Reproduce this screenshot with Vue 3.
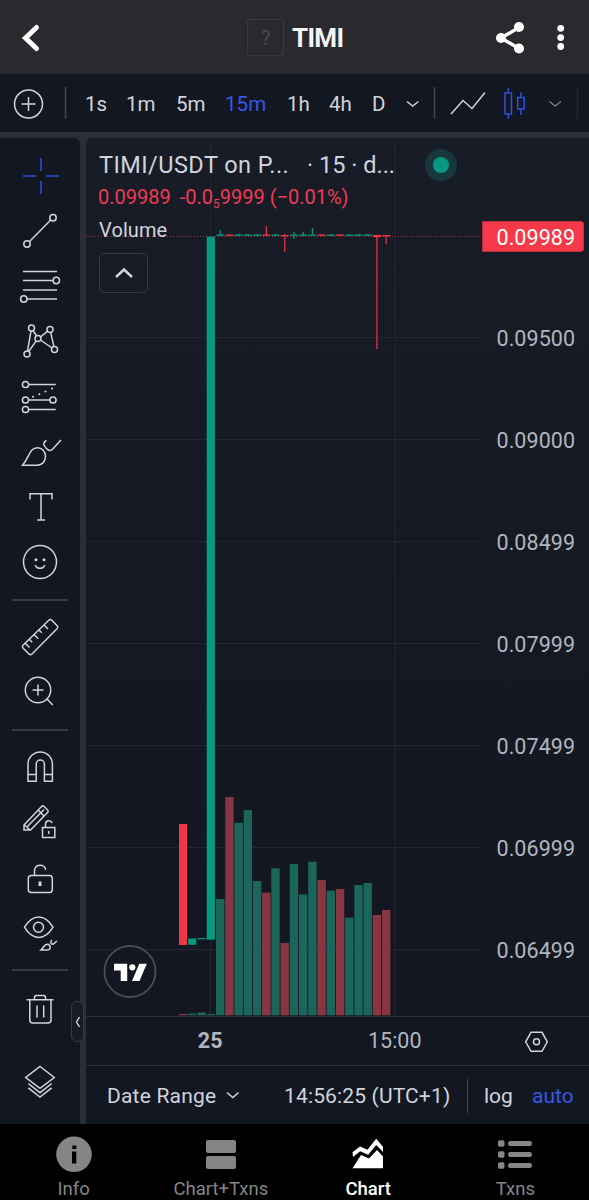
<script setup>
const intervals = [
  { t: '1s', w: 41 }, { t: '1m', w: 50 }, { t: '5m', w: 49 }, { t: '15m', w: 62, on: true },
  { t: '1h', w: 42 }, { t: '4h', w: 43 }, { t: 'D', w: 34 },
]
const prices = [
  ['0.09500', 337.5], ['0.09000', 439.5], ['0.08499', 541.5], ['0.07999', 643.5],
  ['0.07499', 745.5], ['0.06999', 847.5], ['0.06499', 949.5],
]
const pitch = 9.22
const volumes = [
  [899, 'u'], [797, 'd'], [822.7, 'u'], [810, 'u'], [881, 'u'], [892.7, 'd'], [868.3, 'u'],
  [943, 'd'], [864, 'u'], [894.3, 'u'], [861.7, 'u'], [880, 'd'], [890.7, 'u'], [889, 'd'],
  [917.7, 'u'], [885, 'u'], [883, 'u'], [915, 'd'], [910, 'd'],
].map(([y, k], i) => ({ x: 216 + i * pitch, y, k }))
const early = [[179, 1014, 'd'], [188.2, 1013.6, 'u'], [197.4, 1012.5, 'u'], [206.7, 1014, 'u']]
const candles = [
  [230, 236, 'u'], [235, 236, 'd'], [234, 235, 'u'], [234, 235, 'u'], [234, 235, 'u'],
  [226, 236, 'd'], [234, 235, 'u'], [234, 252, 'd'], [232, 239, 'u'], [232, 236, 'u'],
  [228, 235, 'u'], [234, 235, 'd'], [234, 235, 'u'], [234, 235, 'd'], [234, 235, 'u'],
  [234, 235, 'u'], [234, 235, 'u'], [235, 349, 'd'], [236, 244, 'd'],
].map(([a, b, k], i) => ({ x: 220.2 + i * pitch, a, b, k }))
</script>

<template>
  <div class="app">
    <header class="head">
      <svg class="back" width="60" height="74" viewBox="0 0 60 74"><path d="M36.500 27.500 25.500 38 36.500 48.500" /></svg>
      <div class="title"><span class="badge">?</span><span>TIMI</span></div>
      <svg class="acts" width="109" height="74" viewBox="480 0 109 74">
        <path d="M519 27.5 501 38 519 48.5" />
        <circle cx="519" cy="27" r="5" /><circle cx="501" cy="38" r="5" /><circle cx="519" cy="48.5" r="5" />
        <circle cx="560.7" cy="28.3" r="3.4" /><circle cx="560.7" cy="37.6" r="3.4" /><circle cx="560.7" cy="46.5" r="3.4" />
      </svg>
    </header>

    <nav class="bar">
      <svg width="85" height="58" viewBox="0 74 85 58" class="ln">
        <circle cx="28.5" cy="104" r="14" /><path d="M28.5 97v14M21.5 104h14" />
        <path class="sep" d="M65.5 87v32" />
      </svg>
      <span v-for="i in intervals" :key="i.t" class="int" :class="{ on: i.on }" :style="{ width: i.w + 'px' }">{{ i.t }}</span>
      <svg width="183" height="58" viewBox="406 74 183 58" class="ln">
        <path d="m407 101.500 5.700 4.500 5.700-4.500" />
        <path class="sep" d="M434.500 87v32" />
        <path d="m451 114 12-13.500 9 8 13-16" />
        <g class="blue"><path d="M508.300 88v5M508.300 114v5M520.800 92.500v5M520.800 109v6" /><path d="M505 93h6.500v21H505zM517.700 97.500h6.500V109h-6.500z" /></g>
        <path class="dim" d="m549.500 101.500 5.700 4.500 5.700-4.500" />
        <path class="faint" d="M577.500 87v32" />
      </svg>
    </nav>

    <main class="main">
      <aside class="tools">
        <svg height="65" viewBox="0 138 80 65" class="ln blue"><path d="M41 158v13M41 181v13M23 176h13M46 176h13" /></svg>
        <svg height="55" viewBox="0 203 80 55" class="ln"><circle cx="53" cy="217.700" r="3.200" /><circle cx="27" cy="244" r="3.200" /><path d="m29.300 241.700 21.400-21.700" /></svg>
        <svg height="55" viewBox="0 258 80 55" class="ln"><path d="M23 271.500h34M23 280.500h30M23 290h34M27 299h30" /><circle cx="56.300" cy="280.500" r="3.200" /><circle cx="23.800" cy="299" r="3.200" /></svg>
        <svg height="55" viewBox="0 313 80 55" class="ln"><circle cx="31.500" cy="328" r="3" /><circle cx="50" cy="329.500" r="3" /><circle cx="38" cy="338.500" r="3" /><circle cx="54.500" cy="349.500" r="3" /><circle cx="27" cy="354" r="3" /><path d="m27.500 351 3.500-20M28.700 351.500l7.500-10.600M33 330.500l3.500 5.500M40.500 337l7-5.800M40.500 340l11.500 8M50.700 332.400l3.200 14.200" /></svg>
        <svg height="56" viewBox="0 368 80 56" class="ln"><circle cx="25.500" cy="384.500" r="3.100" /><circle cx="25.500" cy="400" r="3.100" /><circle cx="53" cy="400" r="3.100" /><circle cx="25.500" cy="409.500" r="3.100" /><path d="M28.700 384.500h27M28.700 400H50M28.700 409.500h27" /><path class="dots" d="M33 396.700h.1M39.300 394.200h.1M45.500 391.500h.1M52 388.500h.1" /></svg>
        <svg height="56" viewBox="0 424 80 56" class="ln"><path d="M22.500 465.300H37c5.500 0 8.500-4.300 8.500-9s-3.500-8.600-8-8.600c-8.500 0-8 10-15 17.600zM46.500 440.500c-3 1.500-3.300 3.500-2 5.500 2 3.500 5.500 6 8 3.300l8.500-9.300" /></svg>
        <svg height="54" viewBox="0 480 80 54" class="ln"><path d="M30 499.500v-5.700h22v5.700M41 493.800V520M37 520h8" /></svg>
        <svg height="65" viewBox="0 534 80 65" class="ln"><circle cx="40" cy="562" r="16.500" /><circle class="fill" cx="36" cy="559.800" r="1.500" /><circle class="fill" cx="44" cy="559.800" r="1.500" /><path d="M35.300 565.200c1.500 4.200 7.900 4.200 9.400 0" /></svg>
        <i class="rule" />
        <svg height="62" viewBox="0 601 80 62" class="ln"><path d="M48.800 620.300q1.500-1.500 3 0l5.400 5.400q1.300 1.400 0 2.800L32 654q-1.500 1.500-3 0l-6-6q-1.300-1.400 0-2.800zM44 625l4 4M39 630l2.700 2.700M34.200 634.800l4 4M29.500 639.500l2.700 2.700M25.500 643.500l4 4" /></svg>
        <svg height="66" viewBox="0 663 80 66" class="ln"><circle cx="38" cy="690" r="12.700" /><path d="m47 699 5.800 6M38 684.500v11M32.500 690h11" /></svg>
        <i class="rule" />
        <svg height="64" viewBox="0 731 80 64" class="ln"><path d="M28 781.200v-17a12.200 12.200 0 0 1 24.400 0v17h-8v-17a4.100 4.100 0 0 0-8.200 0v17zM28 774.500h8M44.500 774.500h8" /></svg>
        <svg height="55" viewBox="0 795 80 55" class="ln"><path d="m24 825 17.500-18.500q1.300-1.200 2.600 0l3.500 3.500q1.200 1.200 0 2.500L30.500 830H24zM24 824.500l6 5.500M27.500 826.500l16.500-17M38 810l6 6" /><path d="M42.500 827.500h12.300v10H42.500zM45.500 827.500v-3.200c0-4.200 5-4.800 6.700-1.500M48.700 831v3" /></svg>
        <svg height="56" viewBox="0 850 80 56" class="ln"><rect x="28.300" y="875.500" width="24" height="17" rx="3" /><path d="M34.500 875.500v-4.200c0-7.600 10-8 11.300-1.500" /><path class="bold" d="M40 881.500v4.500" /></svg>
        <svg height="63" viewBox="0 906 80 63" class="ln"><path d="M24.500 927.200c8-13.700 20.500-13.700 28.500 0-8 13.700-20.500 13.700-28.500 0z" /><circle cx="38.500" cy="927.200" r="5" /><path d="M41 950h6c3.500 0 4.300-3.800 1.700-5.500-3.900-2-5 3.200-7.700 5.500zM51.800 940c-2 2-.8 4.800 1.600 4l3.600-3" /></svg>
        <i class="rule" />
        <svg height="69" viewBox="0 971 80 69" class="ln"><path d="M26.500 999.700h27M34.500 999.500v-2q0-2 2-2h7q2 0 2 2v2M29.800 1000v20q0 3 3 3H48q3 0 3-3v-20M37 1005.500v12M43.700 1005.500v12" /></svg>
        <svg height="84" viewBox="0 1040 80 84" class="ln"><path d="m40 1066.500 14.300 11L40 1088.300l-14.300-10.800zM28.300 1083.500 40 1092.700l11.700-9.200M28.300 1087.800 40 1097l11.700-9.200" /></svg>
      </aside>

      <section class="work">
        <svg class="chart" width="503" height="928" viewBox="86 138 503 928">
          <g class="grid">
            <path v-for="p in prices" :key="p[0]" :d="`M86 ${p[1]}H482`" />
            <path d="M210.500 138V1016M395 138V1016" />
          </g>
          <path class="axis" d="M86 1016.500H589M86 1065.500H589" />
          <rect v-for="v in volumes" :key="v.x" :class="['v', v.k]" :x="v.x" :y="v.y" width="8.400" :height="1015.300 - v.y" />
          <rect v-for="v in early" :key="v[0]" :class="['v', v[2]]" :x="v[0]" :y="v[1]" width="8.400" :height="1015.300 - v[1]" />
          <path class="last" d="M86 236.500H482" />
          <rect class="d" x="179" y="824" width="8" height="121" />
          <rect class="u" x="188.200" y="938.500" width="8" height="6.300" />
          <rect class="u" x="197.500" y="938" width="8.300" height="1.300" />
          <rect class="u" x="206.700" y="236.700" width="8.200" height="703" />
          <g v-for="c in candles" :key="c.x" :class="c.k">
            <rect :x="c.x - 0.6" :y="c.a" width="1.200" :height="c.b - c.a" />
            <rect :x="c.x - 4" :y="c.k === 'd' && c.b > 240 ? 235 : 234.500" width="8" :height="c.b > 300 ? 2.200 : 1.300" />
          </g>
          <path class="tag" d="M482.300 221.300h98q3.500 0 3.500 3v24.500q0 3-3.500 3h-98z" />
          <text class="num white" x="496.500" y="245" textLength="78.500">0.09989</text>
          <text v-for="p in prices" :key="p[1]" class="num" x="496.500" :y="p[1] + 8.200" textLength="78.500">{{ p[0] }}</text>
          <text class="num b" x="197.700" y="1048" textLength="25">25</text>
          <text class="num" x="368" y="1048" textLength="53.500">15:00</text>
          <g class="ln"><path d="m531 1032.300-5.300 9.500 5.300 9.500h11l5.300-9.500-5.300-9.500z" /><circle cx="536.500" cy="1041.800" r="3" /></g>
          <g class="ln logo"><circle cx="130" cy="971.500" r="25.500" /><path d="M114 963.700h13.200V981h-6.500v-10.500H114zM139.300 963.700h7.500L139.500 981H132z" /><circle class="ball" cx="132.300" cy="967.300" r="3.100" /></g>
        </svg>
        <div class="legend">
          <div class="sym"><span class="name">TIMI/USDT on P...</span><span class="res">· 15 · d...</span><b class="live" /></div>
          <div class="chg"><span>0.09989</span><span class="delta">-0.0<small>5</small>9999 (−0.01%)</span></div>
          <div class="vol">Volume</div>
          <div class="fold"><svg width="20" height="12" viewBox="0 0 20 12"><path d="m2 10 8-7.500 8 7.500" /></svg></div>
        </div>
        <footer class="foot">
          <span class="range">Date Range</span>
          <svg width="14" height="9" viewBox="0 0 14 9" class="ln"><path d="m1 1.500 5.800 5 5.800-5" /></svg>
          <span class="clock">14:56:25 (UTC+1)</span>
          <i class="bar-sep" />
          <span class="log">log</span>
          <span class="auto">auto</span>
        </footer>
      </section>
      <div class="grip"><svg width="6" height="12" viewBox="0 0 6 12"><path d="M4.500 1 1.500 6l3 5" /></svg></div>
    </main>

    <nav class="tabs">
      <div class="tab">
        <svg width="40" height="50" viewBox="53 1124 40 50"><circle cx="73" cy="1154.300" r="17.800" /><path class="cut" d="M71.300 1145.500h4v3.500h-4zM71 1151.500h4.300v12H71z" /></svg>
        <span>Info</span>
      </div>
      <div class="tab">
        <svg width="40" height="50" viewBox="200.500 1124 40 50"><rect x="205.500" y="1140" width="30" height="13" rx="2" /><rect x="205.500" y="1156" width="30" height="13" rx="2" /></svg>
        <span>Chart+Txns</span>
      </div>
      <div class="tab cur">
        <svg width="40" height="50" viewBox="348.500 1124 40 50"><path d="M353 1168.300 361.500 1155l8 3.500 8-8.500 6 6.500v11.800z" /><path d="m353 1152.300 7.500-5.800 7.500 3.200 8.700-11 6.800 8v5.300l-6.800-7-8 9.700-8-3.500-7.200 5.800z" /></svg>
        <span>Chart</span>
      </div>
      <div class="tab">
        <svg width="40" height="50" viewBox="496 1124 40 50"><g v-for="y in [1140.300, 1151.300, 1162.300]" :key="y"><rect x="499" :y="y" width="6.500" height="6.500" rx="1.700" /><rect x="509" :y="y + 0.800" width="24" height="5" rx="2.300" /></g></svg>
        <span>Txns</span>
      </div>
    </nav>
  </div>
</template>

<style>
html, body { background: #000; overflow: hidden; }
</style>
<style scoped>
.app { width: 589px; height: 1200px; display: flex; flex-direction: column; background: #000; font-family: Roboto, sans-serif; color: #d1d4dc; overflow: hidden; white-space: nowrap; }
svg { display: block; flex: none; fill: none; }
.head { height: 74px; background: #2a292e; display: flex; justify-content: space-between; }
.back path { stroke: #fff; stroke-width: 5; stroke-linecap: round; stroke-linejoin: miter; }
.title { display: flex; align-items: center; gap: 8px; width: 160px; margin-left: 98px; padding-left: 8px; padding-top: 1px; font-size: 26px; font-weight: 700; letter-spacing: -.7px; color: #f5f5f6; box-sizing: border-box; }
.badge { width: 37px; height: 37px; box-sizing: border-box; border: 1px dotted #49484d; border-radius: 2px; color: #49484d; font: 400 20px/36px Roboto, sans-serif; text-align: center; }
.acts circle { fill: #fff; }
.acts path { stroke: #fff; stroke-width: 3.4; }
.bar { height: 58px; background: #131722; border-bottom: 6px solid #2a2e39; display: flex; align-items: center; font-size: 20.500px; flex: none; }
.int { flex: none; letter-spacing: .1px; padding-top: 1px; }
.on { color: #3558e6; }
.ln { stroke: #d1d4dc; stroke-width: 1.500; }
.ln .sep { stroke: #434651; }
.ln .dim { stroke: #777a84; }
.ln .faint { stroke: #22262f; }
.blue, .ln .blue { stroke: #2f50dc; }
.dots { stroke-width: 2; stroke-linecap: round; }
.bold { stroke-width: 3; }
.fill { fill: #d1d4dc; stroke: none; }
.main { height: 986px; display: flex; position: relative; background: #2a2e39; flex: none; }
.tools { width: 80px; background: #131722; border-radius: 0 6px 0 0; margin-right: 6px; flex: none; }
.tools svg { width: 80px; }
.rule { display: block; height: 2px; width: 56px; margin-left: 12px; background: #363a45; }
.work { width: 503px; background: linear-gradient(#181c27, #131722 75%); border-radius: 6px 0 0 0; position: relative; }
.grid path { stroke: #222631; }
.axis { stroke: #2a2e39; }
.u { fill: #089981; }
.d { fill: #f23645; }
.v.u { fill: #1b655b; }
.v.d { fill: #873642; }
.last { stroke: #a32e40; stroke-dasharray: 1 2; }
.tag { fill: #f63948; }
.num { font-size: 21.500px; fill: #b2b5be; }
.white { fill: #fff; }
.b { font-weight: 700; }
.logo circle { stroke: #4a4d56; stroke-width: 1.800; fill: #131722; }
.logo path, .logo .ball { fill: #fff; stroke: none; }
.legend { position: absolute; left: 13px; top: 12px; }
.sym { display: flex; align-items: center; height: 30px; font-size: 23.500px; }
.name { width: 208px; letter-spacing: .45px; }
.res { width: 117.500px; }
.live { width: 16px; height: 16px; border-radius: 50%; background: #089981; border: 8.500px solid #18383d; margin-top: -1px; }
.chg { display: flex; height: 32px; align-items: center; font-size: 20px; color: #f23a55; margin-top: 1px; margin-left: -1px; }
.delta { margin-left: 9px; }
.chg small { font-size: 12px; position: relative; top: 4px; }
.vol { height: 30px; line-height: 32px; font-size: 20px; margin-top: 1px; letter-spacing: .1px; }
.fold { width: 49px; height: 40px; box-sizing: border-box; border: 1px solid #363a45; border-radius: 5px; margin: 9px 0 0; display: flex; align-items: center; justify-content: center; }
.fold path { stroke: #d1d4dc; stroke-width: 2.500; }
.foot { height: 58px; display: flex; align-items: center; font-size: 21px; padding-left: 21px; padding-top: 1px; box-sizing: border-box; }
.range { width: 119px; letter-spacing: .2px; }
.clock { margin-left: 44px; width: 183px; letter-spacing: .15px; }
.bar-sep { width: 1px; height: 34px; background: #434651; margin-right: 16px; }
.log { width: 48px; }
.auto { color: #3558e6; }
.grip { position: absolute; left: 71px; top: 863px; width: 13px; height: 41px; box-sizing: border-box; border: 1px solid #363a45; border-radius: 6px; background: #171b26; display: flex; align-items: center; justify-content: center; }
.grip path { stroke: #d1d4dc; stroke-width: 1.400; }
.tabs { display: flex; height: 76px; flex: none; }
.tab { flex: 1; display: flex; flex-direction: column; align-items: center; font-size: 18.500px; line-height: 31px; color: #858585; }
.tab svg { fill: #858585; }
.cur { color: #fff; font-weight: 500; }
.cur svg { fill: #fff; }
.cut { fill: #000; }
</style>
